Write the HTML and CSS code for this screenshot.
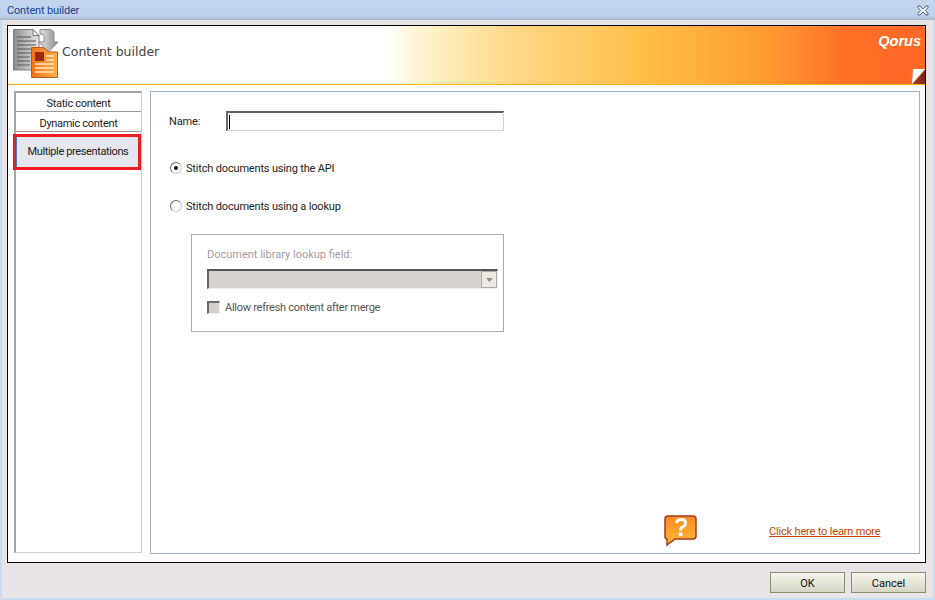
FILE: index.html
```html
<!DOCTYPE html>
<html lang="en">
<head>
<meta charset="utf-8">
<title>Content builder</title>
<link rel="stylesheet" href="styles.css">
</head>
<body>
<div class="window">
  <div class="titlebar">
    <span class="title-text">Content builder</span>
    <svg class="close" width="14" height="11" viewBox="0 0 14 11"><path d="M2 1h2l3 3 3-3h2v1.500L9.500 5.500 12 8.500V10h-2L7 7l-3 3H2V8.500L4.500 5.500 2 2.500z" fill="#f4f6fa" stroke="#5a6470" stroke-width="1"/></svg>
  </div>
  <div class="frame">
    <div class="banner">
      <svg class="doc-icon" width="46" height="50" viewBox="0 0 46 50">
        <defs>
          <linearGradient id="g1" x1="0" y1="0" x2="1" y2="0"><stop offset="0" stop-color="#8d8d8d"/><stop offset="1" stop-color="#e8e8e8"/></linearGradient>
          <linearGradient id="g2" x1="0" y1="0" x2="1" y2="0"><stop offset="0" stop-color="#ef741a"/><stop offset="1" stop-color="#fdaf4e"/></linearGradient>
          <linearGradient id="g3" x1="0" y1="0" x2="1" y2="0"><stop offset="0" stop-color="#e4e4e4"/><stop offset="1" stop-color="#8c8c8c"/></linearGradient>
        </defs>
        <path d="M0.500 1.500H20l6 6V42H0.500z" fill="url(#g1)" stroke="#7c7c7c"/>
        <path d="M20 1.500V7.500h6z" fill="#f6f6f6" stroke="#7c7c7c"/>
        <path d="M4 9h14M4 13h19M4 17h19M4 21h19M4 25h19M4 29h13M4 33h13M4 37h13" stroke="#585858" stroke-width="1.200"/>
        <path d="M27 1.500H36Q41 1.500 41 6V14H45L35.500 24 26 14H31V8Q31 6 28 6H27z" fill="url(#g3)" stroke="#8a8a8a"/>
        <path d="M18.500 19.500H30L36 24H44.500V49.500H18.500z" fill="url(#g2)" stroke="#c4560f"/>
        <rect x="22" y="24" width="9" height="9" fill="#9c2a10"/>
        <path d="M33 28h8M33 32h8M22 36h19M22 40h19M22 44h19" stroke="#ffe9c0" stroke-width="1.400"/>
      </svg>
      <span class="banner-title">Content builder</span>
      <span class="brand">Qorus</span>
      <svg class="fold" width="13" height="15" viewBox="0 0 13 15">
        <defs><linearGradient id="g5" x1="0" y1="1" x2="1" y2="0"><stop offset="0" stop-color="#a83a24"/><stop offset="1" stop-color="#6e1c14"/></linearGradient></defs>
        <path d="M1 0H13L0 15z" fill="#fff"/>
        <path d="M13 1V15H1z" fill="url(#g5)"/>
      </svg>
    </div>
    <div class="workarea">
      <nav class="sidebar">
        <div class="nav-item nav-first">Static content</div>
        <div class="nav-item nav-second">Dynamic content</div>
        <div class="nav-item nav-selected">Multiple presentations</div>
      </nav>
      <main class="content">
        <div class="name-row">
          <label class="name-label">Name:</label>
          <div class="name-input"><span class="caret"></span></div>
        </div>
        <div class="radio-row radio-first"><span class="radio radio-on"></span><span>Stitch documents using the API</span></div>
        <div class="radio-row radio-second"><span class="radio"></span><span>Stitch documents using a lookup</span></div>
        <div class="group">
          <div class="group-label">Document library lookup field:</div>
          <div class="select">
            <span class="select-btn"><svg width="7" height="4" viewBox="0 0 7 4"><path d="M0 0h7L3.500 4z" fill="#8f8f8f"/></svg></span>
          </div>
          <div class="check-row"><span class="checkbox"></span><span>Allow refresh content after merge</span></div>
        </div>
        <div class="help-row">
          <svg class="help-icon" width="34" height="32" viewBox="0 0 34 32">
            <defs><linearGradient id="g4" x1="0" y1="0" x2="0" y2="1"><stop offset="0" stop-color="#ff8a24"/><stop offset="1" stop-color="#ffb93a"/></linearGradient></defs>
            <path d="M4 1H29Q32 1 32 4V21Q32 24 29 24H11L3 30V24Q1 24 1 21V4Q1 1 4 1z" fill="url(#g4)" stroke="#a33a22" stroke-width="1.500"/>
            <path d="M12.500 8Q13 4.500 17 4.500 21.500 4.500 21.500 8 21.500 10.500 18.500 12 16.500 13 16.500 15.500" fill="none" stroke="#fff" stroke-width="3"/>
            <rect x="14.800" y="17.500" width="3.500" height="3.500" fill="#fff"/>
          </svg>
          <a class="help-link" href="#">Click here to learn more</a>
        </div>
      </main>
    </div>
  </div>
  <div class="footer">
    <button class="btn" type="button">OK</button>
    <button class="btn" type="button">Cancel</button>
  </div>
</div>
</body>
</html>
```
FILE: styles.css
```css
* { box-sizing: border-box; }
html, body { margin: 0; padding: 0; }
body {
  width: 935px;
  height: 600px;
  overflow: hidden;
  font-family: Roboto, "Liberation Sans", Arial, sans-serif;
  font-size: 11px;
  letter-spacing: -0.170px;
  color: #222;
}
.window {
  width: 935px;
  height: 600px;
  display: flex;
  flex-direction: column;
  background: #e7e3e7;
  border-left: 2px solid #c8dbf1;
  border-right: 2px solid #c8dbf1;
  border-bottom: 2px solid #c8dbf1;
}
.titlebar {
  height: 20px;
  margin: 0 -2px;
  padding: 2px 5px 0 7px;
  display: flex;
  align-items: center;
  justify-content: space-between;
  background: linear-gradient(#c4d6ed, #bdd2ec 80%, #b0c2d8);
  border-bottom: 1px solid #a9b8c9;
  flex: none;
}
.title-text { color: #20458c; }
.close { display: block; }
.frame {
  margin: 5px 7px 0 5px;
  height: 538px;
  flex: none;
  background: #fff;
  border: 1px solid #000;
  display: flex;
  flex-direction: column;
}
.banner {
  height: 59px;
  flex: none;
  position: relative;
  display: flex;
  align-items: center;
  padding-left: 5px;
  border-bottom: 1px solid #ffb100;
  border-top-right-radius: 2px;
  background: linear-gradient(90deg, #fff 0, #fff 376px, #fff2c8 420px, #ffd98a 500px, #ffbe45 640px, #ff9a30 760px, #ff6f28 840px, #ff6724 100%);
}
.doc-icon { align-self: flex-start; margin-top: 2px; flex: none; }
.banner-title {
  font-family: "DejaVu Sans", sans-serif;
  font-size: 12.500px;
  letter-spacing: 0;
  color: #444;
  margin-left: 3px;
  margin-top: -7px;
}
.brand {
  position: absolute;
  top: 7px;
  right: 4px;
  color: #fff;
  font-family: "Liberation Sans", Arial, sans-serif;
  font-size: 14.500px;
  letter-spacing: 0;
  font-weight: 700;
  font-style: italic;
}
.fold { position: absolute; right: 0; bottom: 0; }
.workarea {
  flex: 1;
  display: flex;
  gap: 8px;
  padding: 6px 5px 8px 6px;
  min-height: 0;
}
.sidebar {
  width: 128px;
  flex: none;
  margin-bottom: 1px;
  border: 1px solid #cfcfc8;
  border-left: 2px solid #a5a5a5;
  border-top: 2px solid #a5a5a5;
  display: flex;
  flex-direction: column;
}
.nav-item {
  height: 20px;
  padding-top: 1px;
  display: flex;
  align-items: center;
  justify-content: center;
  border-bottom: 1px solid #9a9a9a;
  background: #fff;
  letter-spacing: -0.300px;
}
.nav-first { height: 19px; padding-top: 2px; }
.nav-second { padding-top: 3px; }
.nav-selected {
  height: 36px;
  margin: 2px 0 0 -3px;
  padding: 0 0 2px 2px;
  border: 3px solid #ed1c24;
  background: #e6e6ee;
  box-shadow: inset 1px 0 #5a78c8;
  letter-spacing: -0.380px;
}
.content {
  flex: 1;
  border: 1px solid #9db0cf;
  padding: 19px 15px 0 19px;
  display: flex;
  flex-direction: column;
  min-width: 0;
}
.name-row { display: flex; align-items: center; height: 20px; }
.name-label { width: 57px; margin-left: -1px; }
.name-input {
  width: 278px;
  height: 20px;
  display: flex;
  align-items: center;
  padding-left: 1px;
  border: 1px solid #d6d3cc;
  border-top: 2px solid #5c5c5c;
  border-left: 2px solid #6a6a6a;
}
.caret { width: 1px; height: 14px; background: #000; }
.radio-row { display: flex; align-items: center; gap: 4px; height: 14px; }
.radio-first { margin-top: 30px; }
.radio-second { margin-top: 24px; }
.radio {
  width: 12px;
  height: 12px;
  border-radius: 50%;
  border: 1px solid #666;
  border-right-color: #ccc;
  border-bottom-color: #ccc;
  background: #fff;
  display: flex;
  align-items: center;
  justify-content: center;
  flex: none;
}
.radio-on::after {
  content: "";
  width: 4px;
  height: 4px;
  border-radius: 50%;
  background: #111;
}
.group {
  margin: 21px 0 0 21px;
  width: 313px;
  height: 98px;
  border: 1px solid #ababab;
  padding: 13px 5px 0 15px;
}
.group-label { color: #a49ba3; height: 14px; line-height: 14px; letter-spacing: 0; }
.select {
  margin-top: 7px;
  height: 20px;
  background: #d6d3ce;
  border: 1px solid #f2f1ee;
  border-top: 2px solid #555;
  border-left: 2px solid #666;
  display: flex;
  justify-content: flex-end;
}
.select-btn {
  width: 16px;
  height: 17px;
  background: #ece9e2;
  border: 1px solid #aaa;
  display: flex;
  align-items: center;
  justify-content: center;
}
.check-row {
  display: flex;
  align-items: center;
  gap: 5px;
  margin-top: 11px;
  height: 14px;
  color: #555;
  letter-spacing: -0.260px;
}
.checkbox {
  width: 13px;
  height: 13px;
  background: #d6cfcb;
  border: 1px solid #eee;
  border-top: 2px solid #6b6b6b;
  border-left: 2px solid #6b6b6b;
  flex: none;
}
.help-row {
  margin-top: auto;
  margin-bottom: 6px;
  display: flex;
  align-items: flex-end;
}
.help-icon { margin-left: 494px; flex: none; }
.help-link {
  margin-left: 71px;
  margin-bottom: 9px;
  color: #cc4400;
  text-decoration: underline;
}
.footer {
  flex: 1;
  display: flex;
  justify-content: flex-end;
  gap: 6px;
  padding: 9px 7px 0 0;
}
.btn {
  width: 75px;
  height: 21px;
  padding: 2px 0 0;
  border: 1px solid #8f8f70;
  border-radius: 0;
  background: linear-gradient(#f6f6ee, #d5d5c4);
  font-family: Roboto, "Liberation Sans", Arial, sans-serif;
  font-size: 11px;
  letter-spacing: 0;
  color: #111;
}
```
